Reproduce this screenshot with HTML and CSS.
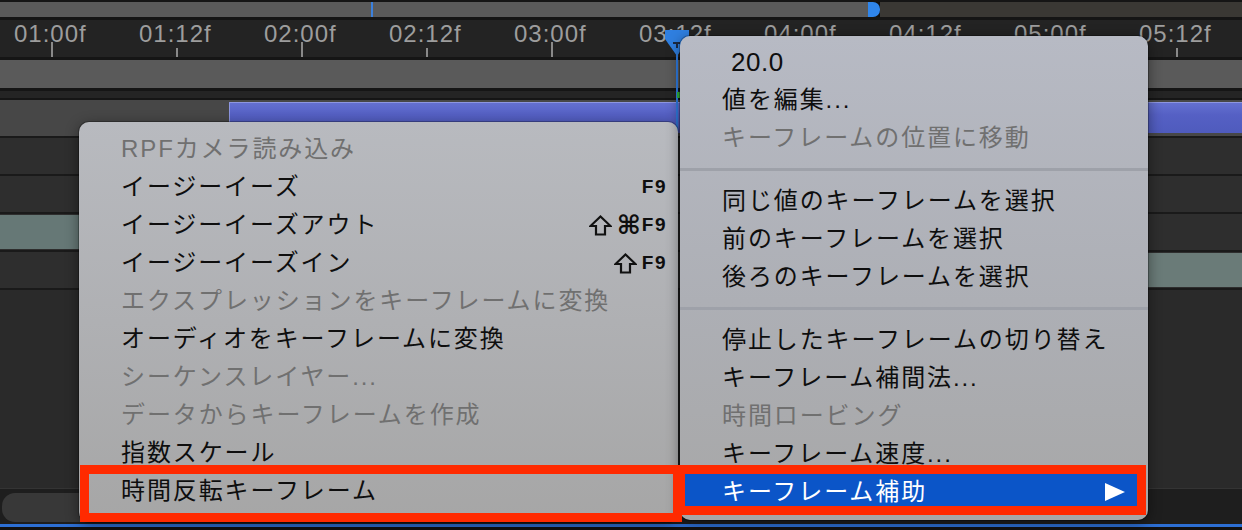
FILE: index.html
```html
<!DOCTYPE html>
<html lang="ja">
<head>
<meta charset="utf-8">
<title>Timeline context menu</title>
<link rel="stylesheet" href="styles.css">
</head>
<body>
<div class="app">
  <div class="topbar">
    <div class="work-area"><span class="work-tick"></span></div>
    <div class="work-handle"></div>
    <div class="work-rest"></div>
  </div>
  <div class="ruler">
    <div class="mark major"><span class="lbl">01:00f</span><span class="tick"></span></div>
    <div class="mark"><span class="lbl">01:12f</span><span class="tick"></span></div>
    <div class="mark major"><span class="lbl">02:00f</span><span class="tick"></span></div>
    <div class="mark"><span class="lbl">02:12f</span><span class="tick"></span></div>
    <div class="mark major"><span class="lbl">03:00f</span><span class="tick"></span></div>
    <div class="mark"><span class="lbl">03:12f</span><span class="tick"></span></div>
    <div class="mark major"><span class="lbl">04:00f</span><span class="tick"></span></div>
    <div class="mark"><span class="lbl">04:12f</span><span class="tick"></span></div>
    <div class="mark major"><span class="lbl">05:00f</span><span class="tick"></span></div>
    <div class="mark"><span class="lbl">05:12f</span><span class="tick"></span></div>
  </div>
  <div class="sep3"></div>
  <div class="navbar"></div>
  <div class="sep3"></div>
  <div class="strip"></div>
  <div class="sep2"></div>
  <div class="tracks">
    <div class="track t1"><div class="t1-left"></div><div class="layer-bar"></div></div>
    <div class="track"></div>
    <div class="track"></div>
    <div class="track"><div class="teal-left"></div></div>
    <div class="track"><div class="teal-gap"></div><div class="teal-right"></div></div>
  </div>
  <div class="empty"></div>
  <div class="footer"><div class="pill"></div></div>
  <div class="blue-line"></div>
</div>

<div class="playhead-line"></div>
<div class="playhead-green"></div>
<svg class="playhead" width="24" height="26" viewBox="0 0 24 26">
  <polygon points="0,0 24,0 24,9 12,26 0,9" fill="#2f7fe0"/>
  <rect x="8" y="12" width="7" height="2" fill="#1b2a44"/>
  <rect x="11" y="12" width="2" height="6" fill="#1b2a44"/>
</svg>

<div class="menu menu-left">
  <div class="item disabled"><span>RPFカメラ読み込み</span></div>
  <div class="item"><span>イージーイーズ</span><span class="key">F9</span></div>
  <div class="item"><span>イージーイーズアウト</span><span class="key"><svg class="shift" width="23" height="21" viewBox="0 0 23 21"><polygon points="11.5,1.5 21.5,11 16,11 16,19.5 7,19.5 7,11 1.5,11" fill="none" stroke="#111" stroke-width="2.2" stroke-linejoin="miter"/></svg><span class="cmd">⌘</span>F9</span></div>
  <div class="item"><span>イージーイーズイン</span><span class="key"><svg class="shift" width="23" height="21" viewBox="0 0 23 21"><polygon points="11.5,1.5 21.5,11 16,11 16,19.5 7,19.5 7,11 1.5,11" fill="none" stroke="#111" stroke-width="2.2" stroke-linejoin="miter"/></svg>F9</span></div>
  <div class="item disabled"><span>エクスプレッションをキーフレームに変換</span></div>
  <div class="item"><span>オーディオをキーフレームに変換</span></div>
  <div class="item disabled"><span>シーケンスレイヤー...</span></div>
  <div class="item disabled"><span>データからキーフレームを作成</span></div>
  <div class="item"><span>指数スケール</span></div>
  <div class="item"><span>時間反転キーフレーム</span></div>
</div>

<div class="menu menu-right">
  <div class="item value"><span>20.0</span></div>
  <div class="item"><span>値を編集...</span></div>
  <div class="item disabled"><span>キーフレームの位置に移動</span></div>
  <div class="sep"></div>
  <div class="item"><span>同じ値のキーフレームを選択</span></div>
  <div class="item"><span>前のキーフレームを選択</span></div>
  <div class="item"><span>後ろのキーフレームを選択</span></div>
  <div class="sep"></div>
  <div class="item"><span>停止したキーフレームの切り替え</span></div>
  <div class="item"><span>キーフレーム補間法...</span></div>
  <div class="item disabled"><span>時間ロービング</span></div>
  <div class="item"><span>キーフレーム速度...</span></div>
  <div class="item active"><span>キーフレーム補助</span><svg class="arrow" width="20" height="18" viewBox="0 0 20 18"><polygon points="0,0 20,9 0,18" fill="#ffffff"/></svg></div>
</div>

<div class="mark-box box-left"></div>
<div class="mark-box box-right"></div>
</body>
</html>
```

FILE: styles.css
```css
html, body {
  margin: 0;
  padding: 0;
  background: #111111;
  width: 1242px;
  height: 530px;
  overflow: hidden;
}

.app {
  width: 1242px;
  height: 530px;
  display: flex;
  flex-direction: column;
  background: #111111;
}

/* top work area bar */
.topbar {
  height: 15px;
  border-top: 2px solid #151515;
  border-bottom: 3px solid #151515;
  display: flex;
  flex: none;
}
.work-area {
  width: 868px;
  background: #5a5a5a;
  display: flex;
}
.work-tick {
  margin-left: 371px;
  width: 2px;
  background: #3b80dc;
}
.work-handle {
  width: 12px;
  background: #2f86ec;
  border-radius: 0 7px 7px 0;
}
.work-rest {
  flex: 1;
  background: #3a3834;
}

/* ruler */
.ruler {
  height: 37px;
  flex: none;
  background: #232323;
  display: flex;
  padding-left: 14px;
  box-sizing: border-box;
  padding-top: 2px;
}
.mark {
  width: 125px;
  flex: none;
  display: flex;
  flex-direction: column;
  justify-content: space-between;
}
.lbl {
  display: block;
  height: 20px;
  line-height: 24px;
  font-family: "Liberation Sans", Arial, sans-serif;
  font-size: 24px;
  letter-spacing: 1px;
  color: #9d9d9d;
  white-space: nowrap;
}
.tick {
  display: block;
  margin-left: 37px;
  width: 2px;
  height: 9px;
  background: #8a8a8a;
}
.mark.major .tick {
  height: 15px;
}

.sep3 { height: 3px; flex: none; background: #151515; }
.sep2 { height: 2px; flex: none; background: #151515; }
.navbar { height: 28px; flex: none; background: #5a5a5a; }
.strip { height: 7px; flex: none; background: #242424; }

/* tracks */
.tracks {
  display: flex;
  flex-direction: column;
  flex: none;
}
.track {
  height: 36px;
  border-bottom: 2px solid #1a1a1a;
  background: #2e2e2e;
  display: flex;
}
.t1 { background: #474747; }
.t1-left { width: 229px; flex: none; }
.layer-bar {
  flex: 1;
  margin: 2px 0 3px 0;
  background: linear-gradient(#6470d0, #5560c4 40%, #4f5bbd);
  border-top: 1px solid #8d96e0;
  border-left: 1px solid #8d96e0;
}
.teal-left {
  width: 240px;
  background: #667876;
  margin: 1px 0;
}
.teal-gap { flex: 1; }
.teal-right {
  width: 300px;
  background: #6a7b78;
  margin: 1px 0;
}

.empty {
  height: 198px;
  flex: none;
  background: #2a2a2a;
}
.footer {
  height: 36px;
  flex: none;
  background: #1e1e1e;
  border-top: 1px solid #343434;
  padding: 4px 0 2px 2px;
  box-sizing: border-box;
  display: flex;
}
.pill {
  width: 400px;
  background: #383838;
  border-radius: 13px;
}
.blue-line {
  height: 3px;
  flex: none;
  background: #2d6fd4;
}

/* playhead */
.playhead {
  position: absolute;
  left: 665px;
  top: 30px;
}
.playhead-line {
  position: absolute;
  left: 676px;
  top: 50px;
  width: 2px;
  height: 470px;
  background: #2f7be0;
}
.playhead-green {
  position: absolute;
  left: 677px;
  top: 92px;
  width: 4px;
  height: 6px;
  background: #2fb43c;
}

/* menus */
.menu {
  position: absolute;
  box-sizing: border-box;
  border-radius: 10px;
  font-family: "Liberation Sans", "Noto Sans CJK JP", sans-serif;
  font-size: 24px;
  letter-spacing: 1.9px;
  color: #0e0e0e;
  box-shadow: 0 3px 14px rgba(0, 0, 0, 0.45), 0 0 0 1px rgba(0, 0, 0, 0.25);
  overflow: hidden;
}
.menu-left {
  left: 79px;
  top: 122px;
  width: 599px;
  height: 400px;
  padding: 8px 11px 0 0;
  background: linear-gradient(#b8babf, #afb0b3 50%, #a6a6a6);
}
.menu-right {
  left: 680px;
  top: 36px;
  width: 468px;
  height: 484px;
  padding-top: 7px;
  background: linear-gradient(#b7bac4, #adafb5 55%, #a7a7a7);
}
.item {
  height: 38px;
  line-height: 38px;
  padding-left: 42px;
  display: flex;
  justify-content: space-between;
  align-items: center;
  white-space: nowrap;
}
.item.disabled { color: #707070; }
.item.value {
  padding-left: 51px;
  font-size: 26px;
  letter-spacing: 0.5px;
}
.item.active {
  margin: 0 5px;
  padding-left: 37px;
  padding-right: 18px;
  background: #0b55c8;
  color: #ffffff;
}
.sep {
  height: 3px;
  margin: 11px 0;
  background: #9ea1a9;
}
.key {
  display: flex;
  align-items: center;
  font-family: "Liberation Sans", Arial, sans-serif;
  font-weight: bold;
  font-size: 19px;
  letter-spacing: 1.5px;
}
.shift {
  margin-right: 5px;
}
.cmd {
  font-family: "DejaVu Sans", sans-serif;
  font-weight: bold;
  font-size: 26px;
  margin-right: 1px;
  letter-spacing: 0;
}

/* annotation boxes */
.mark-box {
  position: absolute;
  box-sizing: border-box;
  border: 9px solid #ff2a00;
}
.box-left {
  left: 80px;
  top: 465px;
  width: 602px;
  height: 57px;
}
.box-right {
  left: 676px;
  top: 465px;
  width: 470px;
  height: 50px;
}
```
